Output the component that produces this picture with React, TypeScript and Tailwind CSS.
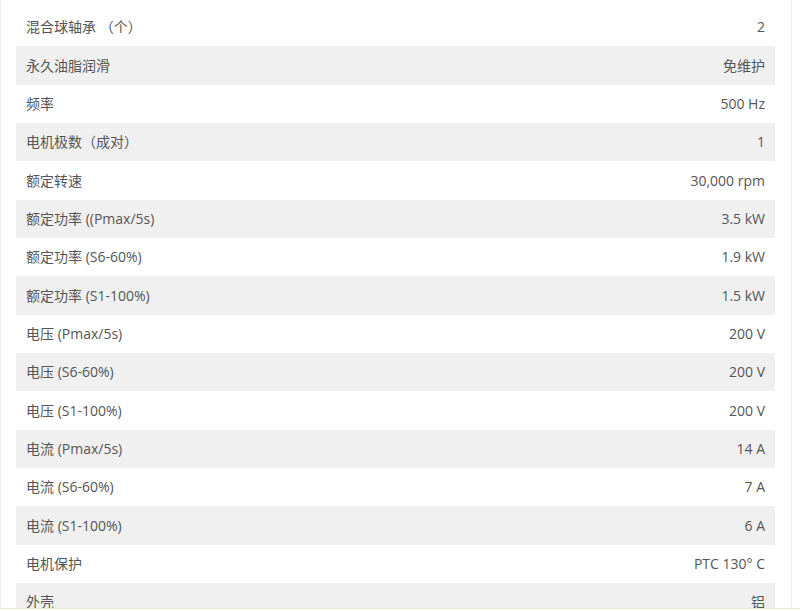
import React from 'react';

const rows: [string, string][] = [
  ['混合球轴承 （个）', '2'],
  ['永久油脂润滑', '免维护'],
  ['频率', '500 Hz'],
  ['电机极数（成对）', '1'],
  ['额定转速', '30,000 rpm'],
  ['额定功率 ((Pmax/5s)', '3.5 kW'],
  ['额定功率 (S6-60%)', '1.9 kW'],
  ['额定功率 (S1-100%)', '1.5 kW'],
  ['电压 (Pmax/5s)', '200 V'],
  ['电压 (S6-60%)', '200 V'],
  ['电压 (S1-100%)', '200 V'],
  ['电流 (Pmax/5s)', '14 A'],
  ['电流 (S6-60%)', '7 A'],
  ['电流 (S1-100%)', '6 A'],
  ['电机保护', 'PTC 130° C'],
  ['外壳', '铝'],
];

export default function App() {
  return (
    <div className="w-[800px] h-[611px] overflow-hidden bg-white text-[14px] text-[#555] font-['Open_Sans','Noto_Sans_CJK_SC',sans-serif]">
      <div className="h-[608px] overflow-hidden">
        <div className="w-[792px] h-full border-l border-r border-[#f2f2f2] pl-[15px] pr-[15px] pt-[8px]">
          <table className="w-[759px] border-collapse">
            <tbody>
              {rows.map(([k, v], i) => (
                <tr key={i} className={i % 2 === 1 ? 'bg-[#f0f0f0]' : ''}>
                  <td className="h-[38.35px] px-[10px] py-0 leading-[20px] align-middle">{k}</td>
                  <td className="h-[38.35px] px-[10px] py-0 leading-[20px] align-middle text-right">{v}</td>
                </tr>
              ))}
            </tbody>
          </table>
        </div>
      </div>
      <div className="h-[1px] bg-[#ece6d2]" />
    </div>
  );
}
